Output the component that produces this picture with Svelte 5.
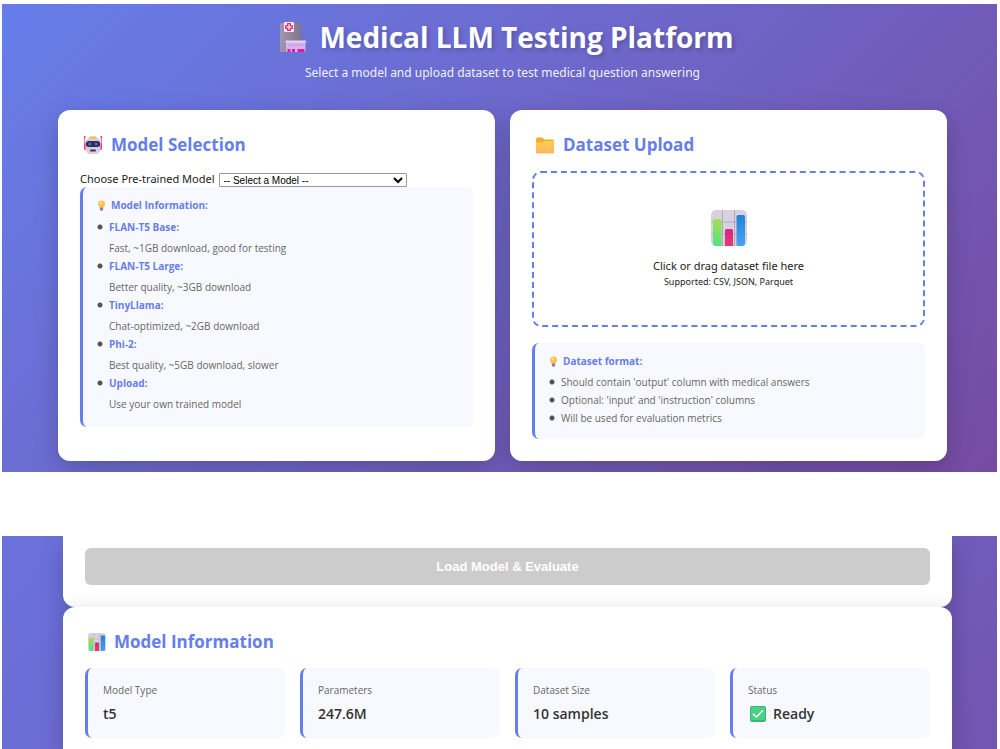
<script lang="ts">
  const modelNotes = [
    { name: 'FLAN-T5 Base', text: 'Fast, ~1GB download, good for testing' },
    { name: 'FLAN-T5 Large', text: 'Better quality, ~3GB download' },
    { name: 'TinyLlama', text: 'Chat-optimized, ~2GB download' },
    { name: 'Phi-2', text: 'Best quality, ~5GB download, slower' },
    { name: 'Upload', text: 'Use your own trained model' },
  ];

  const datasetNotes = [
    "Should contain 'output' column with medical answers",
    "Optional: 'input' and 'instruction' columns",
    'Will be used for evaluation metrics',
  ];

  const stats = [
    { label: 'Model Type', value: 't5' },
    { label: 'Parameters', value: '247.6M' },
    { label: 'Dataset Size', value: '10 samples' },
    { label: 'Status', value: 'Ready', ok: true },
  ];

  let selectedModel = $state('');
  let dataset = $state<FileList | null>(null);
  let ready = $derived(selectedModel !== '' && !!dataset?.length);
</script>

{#snippet chart(size: number)}
  <svg width={size} height={size} viewBox="0 0 36 36" aria-hidden="true">
    <defs>
      <linearGradient id="bar-green" x1="0" y1="0" x2="0" y2="1">
        <stop offset="0" stop-color="#a4e04c" /><stop offset="1" stop-color="#52e085" />
      </linearGradient>
      <linearGradient id="bar-red" x1="0" y1="0" x2="0" y2="1">
        <stop offset="0" stop-color="#cf2a86" /><stop offset="1" stop-color="#f0356a" />
      </linearGradient>
      <linearGradient id="bar-blue" x1="0" y1="0" x2="0" y2="1">
        <stop offset="0" stop-color="#2382d6" /><stop offset="1" stop-color="#46a2ee" />
      </linearGradient>
    </defs>
    <rect width="36" height="36" rx="5" fill="#d8d1e0" />
    <path d="M11.5 0V36M23.5 0V36M0 12H36M0 24H36" stroke="#b2aaba" stroke-width="1" />
    <path d="M2 10.5Q2 9 3.500 9H9Q10.500 9 10.500 10.500V36H5Q2 36 2 33Z" fill="url(#bar-green)" />
    <path d="M14 20.500Q14 19 15.500 19H20.500Q22 19 22 20.500V36H14Z" fill="url(#bar-red)" />
    <path d="M25.500 6.500Q25.500 5 27 5H32.500Q34 5 34 6.500V33Q34 36 31 36H25.500Z" fill="url(#bar-blue)" />
  </svg>
{/snippet}

{#snippet bulb()}
  <svg width="9" height="11" viewBox="1 0 9 12" aria-hidden="true">
    <path d="M5.500 .5A3.900 3.900 0 0 0 1.600 4.300C1.600 6.300 3.500 6.800 3.700 8.600H7.300C7.500 6.800 9.400 6.300 9.400 4.300A3.900 3.900 0 0 0 5.500 .5Z" fill="#fdbf45" />
    <circle cx="4.600" cy="3.300" r="1.700" fill="#ffe07a" />
    <path d="M3.700 8.300H7.300V10.300Q7.300 11.700 5.500 11.700T3.700 10.300Z" fill="#8f7f9b" />
  </svg>
{/snippet}

<div class="page">
  <section class="band intro">
    <header>
      <h1>
        <svg width="28" height="31" viewBox="0 0 28 31" aria-hidden="true">
          <defs>
            <linearGradient id="tower" x1="0" x2="1">
              <stop offset="0" stop-color="#a197ac" /><stop offset="1" stop-color="#80768c" />
            </linearGradient>
          </defs>
          <rect x="1" y="1" width="21" height="29" rx="1.500" fill="url(#tower)" />
          <rect x="5" y="0" width="10" height="10" rx="1" fill="#f6eafc" />
          <path d="M8.700 1.700H11.300V3.800H13.300V6.300H11.300V8.400H8.700V6.300H6.700V3.800H8.700Z" fill="none" stroke="#e92d68" stroke-width="1.300" />
          <path d="M7 19.500H26.500V30H7Z" fill="#d9b4ec" />
          <path d="M6.500 18.500H27V20.500H6.500Z" fill="#ead0f6" />
          <path d="M9 23H25" stroke="#c596df" />
          <path d="M8.500 27H11.500V30H8.500ZM13 27H16V30H13ZM18.500 27H25.500V30H18.500Z" fill="#d321a0" />
        </svg>
        <span>Medical LLM Testing Platform</span>
      </h1>
      <p>Select a model and upload dataset to test medical question answering</p>
    </header>

    <div class="columns">
      <div class="card">
        <h2>
          <svg width="20" height="20" viewBox="0 0 20 20" aria-hidden="true">
            <path d="M1.700 3V14M18.300 3V14" stroke="#ec5b83" stroke-width="1" />
            <circle cx="1.700" cy="2" r="1" fill="#e8365f" /><circle cx="18.300" cy="2" r="1" fill="#e8365f" />
            <rect x="1" y="8" width="3" height="7" rx="1.500" fill="#ee3f6e" />
            <rect x="16" y="8" width="3" height="7" rx="1.500" fill="#ee3f6e" />
            <rect x="2.500" y="2.500" width="15" height="16.500" rx="5.500" fill="#d8cce5" />
            <path d="M7 1.500H13L14 3.500H6Z" fill="#fbb837" />
            <rect x="3" y="6" width="14" height="6" rx="2.500" fill="#302d5c" />
            <circle cx="6.800" cy="9" r="1.500" fill="#357fc0" /><circle cx="13.200" cy="9" r="1.500" fill="#357fc0" />
            <rect x="7" y="14.500" width="6" height="2" rx="1" fill="#403847" />
          </svg>
          <span>Model Selection</span>
        </h2>
        <div class="picker">
          <label for="model">Choose Pre-trained Model</label>
          <select id="model" bind:value={selectedModel}>
            <option value="">-- Select a Model --</option>
            {#each modelNotes as note}
              <option value={note.name}>{note.name}</option>
            {/each}
          </select>
        </div>
        <div class="info">
          <h3>{@render bulb()}<span>Model Information:</span></h3>
          <ul class="models">
            {#each modelNotes as note}
              <li><strong>{note.name}:</strong><p>{note.text}</p></li>
            {/each}
          </ul>
        </div>
      </div>

      <div class="card">
        <h2>
          <svg width="20" height="20" viewBox="0 0 20 20" aria-hidden="true">
            <defs>
              <linearGradient id="folder" x1="0" y1="0" x2="0" y2="1">
                <stop offset="0" stop-color="#ffcf4d" /><stop offset="1" stop-color="#ffb464" />
              </linearGradient>
            </defs>
            <path d="M1 4Q1 2.500 2.500 2.500H7L9.500 4.500H17.500Q19 4.500 19 6V10H1Z" fill="#efae2e" />
            <path d="M1 7.500L7.500 7.500L9.500 6H19V17.500Q19 18.500 18 18.500H2Q1 18.500 1 17.500Z" fill="url(#folder)" />
          </svg>
          <span>Dataset Upload</span>
        </h2>
        <label class="drop">
          <input type="file" accept=".csv,.json,.parquet" bind:files={dataset} />
          {@render chart(36)}
          <span class="drop-title">Click or drag dataset file here</span>
          <small>Supported: CSV, JSON, Parquet</small>
        </label>
        <div class="info">
          <h3>{@render bulb()}<span>Dataset format:</span></h3>
          <ul>
            {#each datasetNotes as note}
              <li>{note}</li>
            {/each}
          </ul>
        </div>
      </div>
    </div>
  </section>

  <section class="band results">
    <div class="card action">
      <button type="button" disabled={!ready}>Load Model &amp; Evaluate</button>
    </div>
    <div class="card summary">
      <h2>{@render chart(18)}<span>Model Information</span></h2>
      <div class="stats">
        {#each stats as stat}
          <div class="stat">
            <span class="stat-label">{stat.label}</span>
            <span class="stat-value">
              {#if stat.ok}
                <svg width="16" height="16" viewBox="0 0 16 16" aria-hidden="true">
                  <rect width="16" height="16" rx="2" fill="#39b874" />
                  <rect x="1" y="1" width="14" height="13" rx="1.500" fill="#4cd083" />
                  <path d="M3.500 8.200L6.500 11L12.500 4.800" fill="none" stroke="#fff" stroke-width="1.500" stroke-linecap="round" stroke-linejoin="round" />
                </svg>
              {/if}
              {stat.value}
            </span>
          </div>
        {/each}
      </div>
    </div>
  </section>
</div>

<style>
  :global(body) {
    background: #fff;
  }

  .page {
    box-sizing: border-box;
    display: flex;
    flex-direction: column;
    gap: 64px;
    min-height: 100vh;
    padding: 4px 3px 0 2px;
    font-family: "Open Sans", "Noto Sans", sans-serif;
    color: #1c1c1c;
  }

  h1, h2, h3, p, ul {
    margin: 0;
    padding: 0;
  }

  svg {
    display: block;
    flex: none;
  }

  .band {
    box-sizing: border-box;
    overflow: hidden;
  }

  .intro {
    padding: 13px 50px 11px 56px;
    background: linear-gradient(135deg, #667eea, #764ba2);
  }

  header {
    display: flex;
    flex-direction: column;
    align-items: center;
    gap: 6px;
    margin-bottom: 27px;
    color: #fff;
  }

  h1 {
    display: flex;
    align-items: center;
    gap: 12px;
    padding-left: 8px;
    font-size: 28px;
    line-height: 40px;
    text-shadow: 2px 2px 4px rgba(0, 0, 0, .2);
  }

  header p,
  .picker,
  .drop {
    font-family: "Noto Sans", "Open Sans", sans-serif;
  }

  header p {
    font-size: 12px;
    line-height: 20px;
    opacity: .9;
  }

  .columns {
    display: grid;
    grid-template-columns: 1fr 1fr;
    gap: 15px;
  }

  .card {
    box-sizing: border-box;
    padding: 22px;
    border-radius: 12px;
    background: #fff;
    box-shadow: 0 8px 24px rgba(0, 0, 0, .2);
  }

  h2 {
    display: flex;
    align-items: center;
    gap: 8px;
    padding-left: 3px;
    margin-bottom: 13px;
    font-size: 17px;
    line-height: 26px;
    color: #667eea;
  }

  .picker {
    display: flex;
    align-items: flex-end;
    gap: 4px;
    font-size: 11px;
    line-height: 16px;
  }

  select {
    width: 188px;
    height: 14px;
    padding: 0;
    border: 1px solid #999;
    border-radius: 1px;
    background: #fff;
    color: #000;
    font: 10px/12px "Liberation Sans", sans-serif;
  }

  .info {
    padding: 9px 14px 12px;
    border-left: 3px solid #667eea;
    border-radius: 7px;
    background: #f8f9ff;
    font-size: 10px;
    line-height: 18px;
    color: #666;
  }

  h3 {
    display: flex;
    align-items: center;
    gap: 5px;
    margin-bottom: 3px;
    font-size: 10px;
    line-height: 18px;
    color: #667eea;
  }

  ul {
    list-style: none;
  }

  li {
    padding-left: 12px;
    background: radial-gradient(circle at 3px 9px, #555 2px, transparent 3px);
  }

  .models {
    padding: 1px 0 2px;
  }

  .models p {
    padding-top: 3px;
    line-height: 18px;
  }

  strong {
    color: #667eea;
  }

  .drop {
    box-sizing: border-box;
    display: flex;
    flex-direction: column;
    align-items: center;
    padding: 37px 16px 36px;
    margin-bottom: 16px;
    border: 2px dashed #667eea;
    border-radius: 9px;
    cursor: pointer;
  }

  .drop input {
    position: absolute;
    width: 1px;
    height: 1px;
    opacity: 0;
  }

  .drop-title {
    margin-top: 11px;
    font-size: 11px;
    line-height: 18px;
  }

  small {
    font-size: 9px;
    line-height: 14px;
  }

  .results {
    display: flex;
    flex: 1;
    flex-direction: column;
    padding: 0 45px 0 61px;
    background: linear-gradient(135deg, #6a72dc, #7355b2);
  }

  .action {
    padding-top: 12px;
    border-radius: 0 0 12px 12px;
  }

  button {
    display: block;
    width: 100%;
    height: 37px;
    border: 0;
    border-radius: 6px;
    background: #667eea;
    color: #fff;
    font: bold 13px "Liberation Sans", sans-serif;
    cursor: pointer;
  }

  button:disabled {
    background: #ccc;
    cursor: not-allowed;
  }

  .summary {
    flex: 1;
    padding-bottom: 11px;
    border-radius: 12px 12px 0 0;
  }

  .stats {
    display: grid;
    grid-template-columns: repeat(4, 1fr);
    gap: 15px;
  }

  .stat {
    display: flex;
    flex-direction: column;
    gap: 3px;
    padding: 13px 15px;
    border-left: 3px solid #667eea;
    border-radius: 7px;
    background: #f8f9ff;
  }

  .stat-label {
    font-size: 10px;
    line-height: 18px;
    color: #666;
  }

  .stat-value {
    display: flex;
    align-items: center;
    gap: 7px;
    font-size: 14px;
    font-weight: 600;
    line-height: 23px;
    color: #333;
  }

  .stat-value svg {
    margin-left: 2px;
  }
</style>
